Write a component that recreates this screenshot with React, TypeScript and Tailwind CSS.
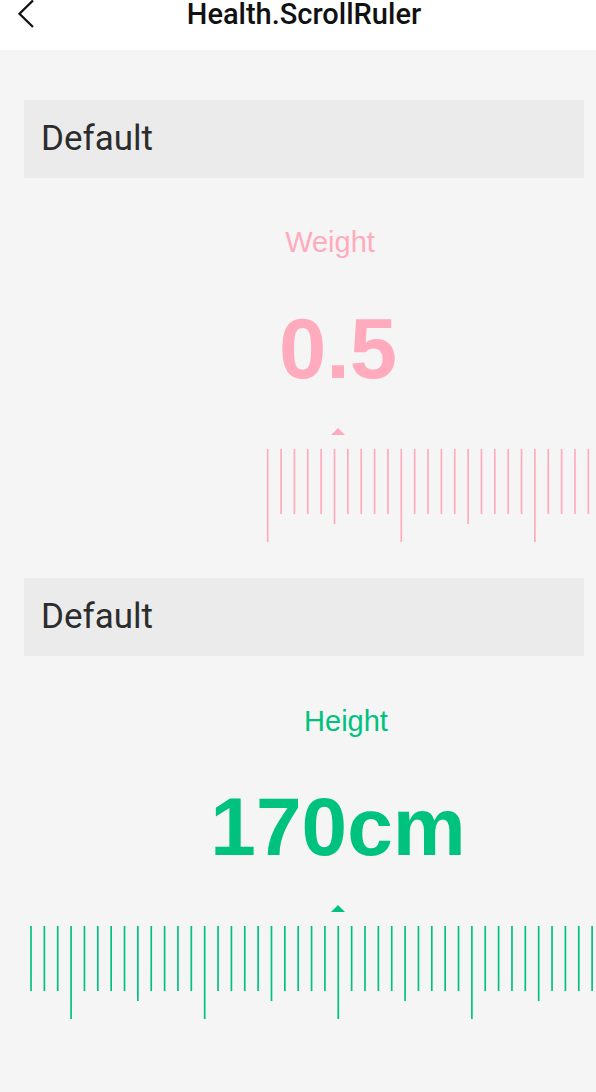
import React from 'react';

const PINK = '#ffabbd';
const GREEN = '#00c27f';

interface RulerProps {
  color: string;
  start: number;
  count: number;
  longAt: number; // index of first long tick
}

// ruler drawing: short ticks, medium every 5, long every 10
const Ruler: React.FC<RulerProps> = ({ color, start, count, longAt }) => {
  const step = 13.36;
  const ticks = Array.from({ length: count }, (_, i) => {
    const k = (((i - longAt) % 10) + 10) % 10;
    const len = k === 0 ? 93 : k === 5 ? 75 : 65;
    return { x: start + i * step, len };
  });
  return (
    <svg width="596" height="95" viewBox="0 0 596 95" className="block">
      {ticks.map((t, i) => (
        <line key={i} x1={t.x} x2={t.x} y1={0} y2={t.len} stroke={color} strokeWidth={1.7} />
      ))}
    </svg>
  );
};

const Pointer: React.FC<{ color: string }> = ({ color }) => (
  <svg width="14" height="7" viewBox="0 0 14 7" className="block">
    <path d="M7 0 L14 7 L0 7 Z" fill={color} />
  </svg>
);

const SectionTitle: React.FC<{ text: string }> = ({ text }) => (
  <div className="ml-[24px] mr-[12px] h-[78px] bg-[#ebebeb] flex items-center pl-[17px]">
    <span className="text-[35px] text-[#2c2c2c] font-['Roboto',sans-serif]">{text}</span>
  </div>
);

export default function App() {
  return (
    <div className="w-[596px] h-[1092px] bg-[#f5f5f5] overflow-hidden font-['Liberation_Sans',Arial,sans-serif]">
      {/* nav bar */}
      <div className="h-[50px] bg-white grid grid-cols-[1fr_auto_1fr] items-start">
        <div className="pl-[17px]">
          <svg width="18" height="28" viewBox="0 0 18 28" className="block">
            <path d="M16 0.5 L2.5 13.8 L16 27" fill="none" stroke="#111" strokeWidth="2.3" />
          </svg>
        </div>
        <div className="text-[29px] leading-[28px] font-medium text-[#111] pl-[12px] font-['Roboto',sans-serif]">Health.ScrollRuler</div>
        <div />
      </div>

      <div className="h-[50px]" />
      <SectionTitle text="Default" />

      {/* weight */}
      <div className="h-[400px] flex flex-col">
        <div className="flex flex-col items-center pl-[80px]">
          <div className="mt-[50px] text-[29px] leading-[29px] pr-[16px]" style={{ color: PINK }}>Weight</div>
          <div className="mt-[50px] text-[85px] leading-[84px] font-bold" style={{ color: PINK }}>0.5</div>
          <div className="mt-[37px]">
            <Pointer color={PINK} />
          </div>
        </div>
        <div className="mt-[14px]">
          <Ruler color={PINK} start={267.7} count={25} longAt={0} />
        </div>
      </div>

      <SectionTitle text="Default" />

      {/* height */}
      <div className="flex flex-col">
        <div className="flex flex-col items-center pl-[80px]">
          <div className="mt-[51px] text-[29px] leading-[29px] pl-[16px]" style={{ color: GREEN }}>Height</div>
          <div className="mt-[49px] text-[82px] leading-[84px] font-bold" style={{ color: GREEN }}>170cm</div>
          <div className="mt-[36px]">
            <Pointer color={GREEN} />
          </div>
        </div>
        <div className="mt-[14px]">
          <Ruler color={GREEN} start={31} count={43} longAt={3} />
        </div>
      </div>
    </div>
  );
}
